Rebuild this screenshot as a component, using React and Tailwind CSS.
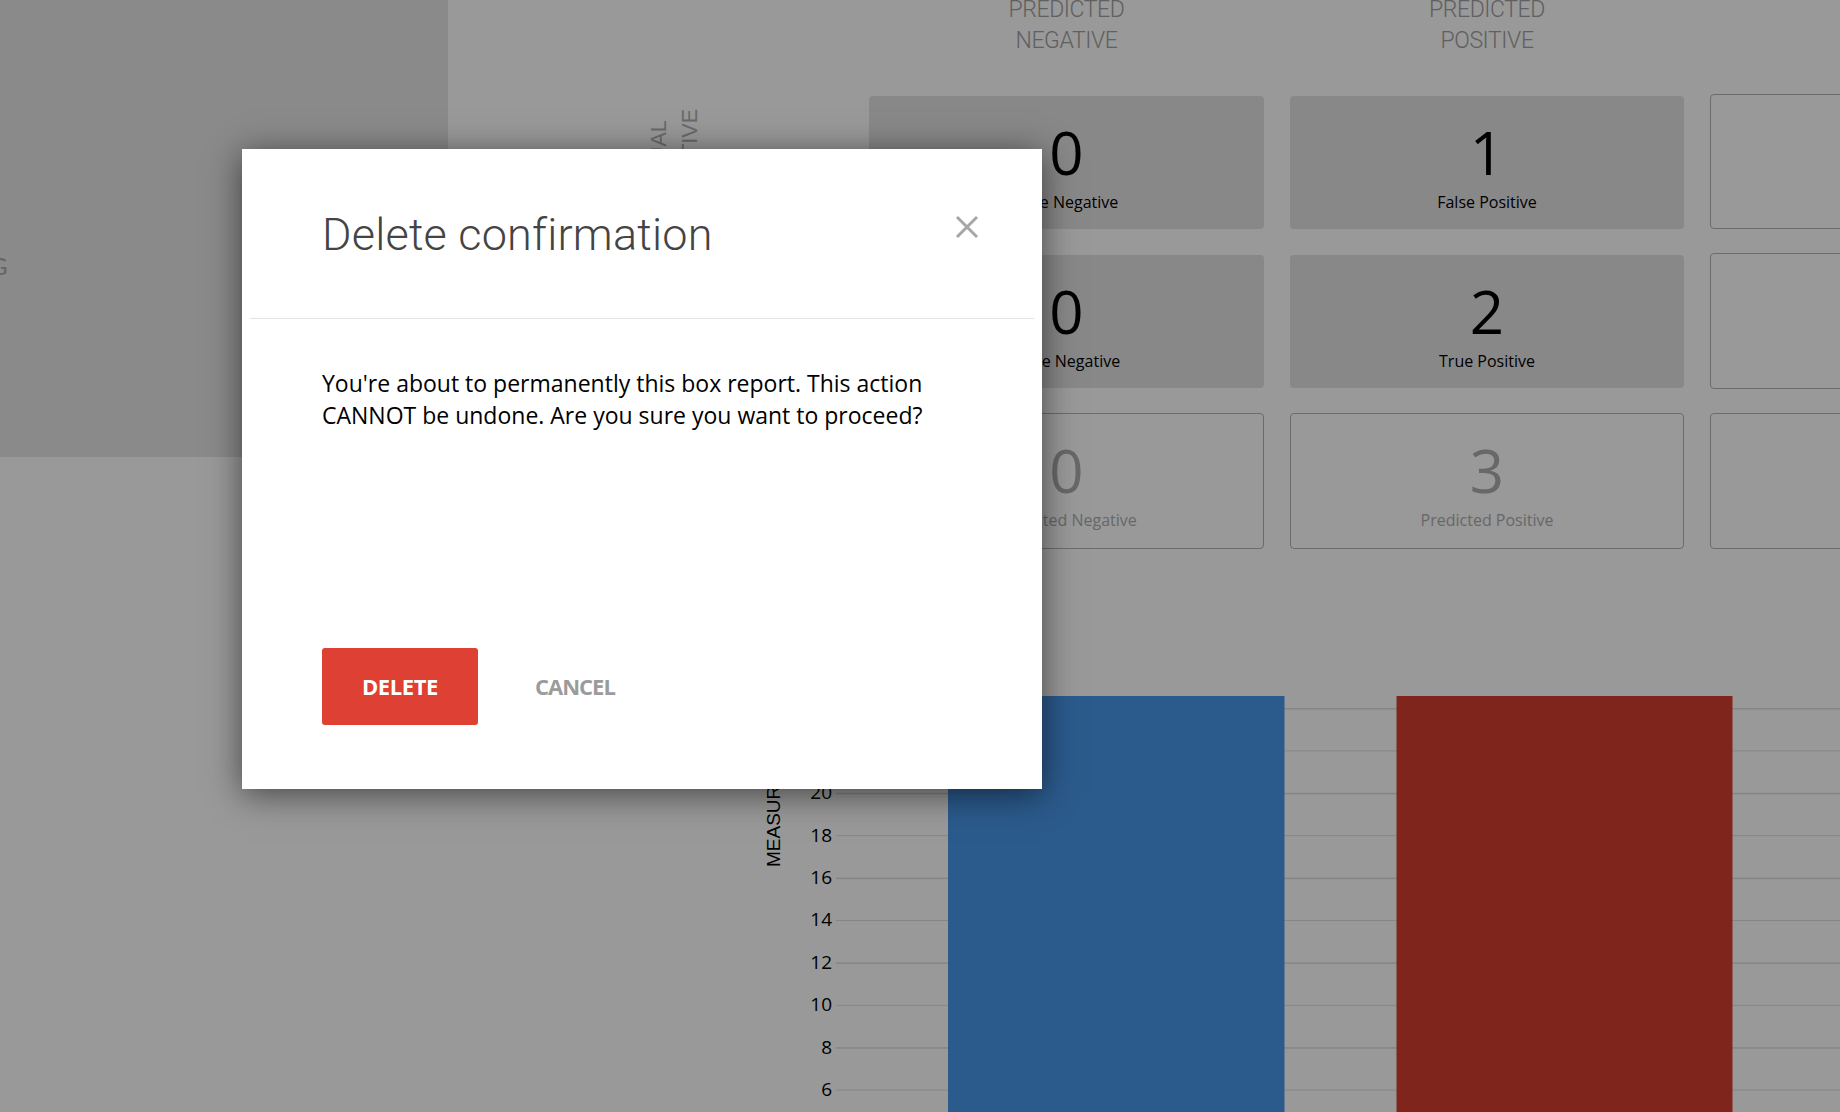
// Boîte de confirmation de suppression par-dessus le rapport (matrice + graphique)
const BODY_FONT = 'font-["Open_Sans",sans-serif]'
const TICKS = [20, 18, 16, 14, 12, 10, 8, 6]

function MatrixCard({ value, label, filled, muted }) {
  return (
    <div
      className={`flex h-full flex-col items-center rounded-[4px] pt-[26px] ${filled ? 'bg-[#e3e3e3]' : 'border border-[#b4b4b4]'} ${muted ? 'text-[#adadad]' : 'text-black'}`}
    >
      <div className={`${BODY_FONT} text-[60px] leading-[60px]`}>{value}</div>
      <div className={`${BODY_FONT} mt-[10px] text-[16px] leading-[20px]`}>{label}</div>
    </div>
  )
}

function Matrix() {
  return (
    <div className="grid grid-cols-[395px_395px_394px_394px] grid-rows-[96px_133px_159px_161px] gap-x-[26px]">
      <div />
      {['PREDICTED NEGATIVE', 'PREDICTED POSITIVE'].map((title) => (
        <div
          key={title}
          className='mx-auto -mt-[6px] w-[140px] text-center font-["Roboto",sans-serif] text-[23px] font-light leading-[31px] tracking-[-0.4px] text-[#a0a0a0]'
        >
          {title}
        </div>
      ))}
      <div />

      <div className="flex items-center pl-[196px]">
        <div className='rotate-180 text-center font-["Liberation_Sans",sans-serif] text-[21.5px] leading-[31px] text-[#b0b0b0] [writing-mode:vertical-rl]'>
          ACTUAL
          <br />
          NEGATIVE
        </div>
      </div>
      <MatrixCard value="0" label="True Negative" filled />
      <MatrixCard value="1" label="False Positive" filled />
      <div className="-mt-[2px] rounded-[4px] border border-[#b4b4b4]" />

      <div />
      <div className="pt-[26px]"><MatrixCard value="0" label="False Negative" filled /></div>
      <div className="pt-[26px]"><MatrixCard value="2" label="True Positive" filled /></div>
      <div className="-mb-[1px] mt-[24px] rounded-[4px] border border-[#b4b4b4]" />

      <div />
      <div className="pt-[25px]"><MatrixCard value="0" label="Predicted Negative" muted /></div>
      <div className="pt-[25px]"><MatrixCard value="3" label="Predicted Positive" muted /></div>
      <div className="mt-[25px] rounded-[4px] border border-[#b4b4b4]" />
    </div>
  )
}

function Chart() {
  const top = 18
  const step = 42.4
  return (
    <svg className="ml-[740px] block h-[422px] w-[1100px]" viewBox="0 0 1100 422">
      {TICKS.map((tick, i) => {
        const y = top + 2 * step + i * step
        return (
          <text key={tick} x="92" y={y + 6.4} textAnchor="end" fontFamily="Open Sans" fontSize="19" fill="#000">
            {tick}
          </text>
        )
      })}
      {Array.from({ length: 10 }).map((_, i) => (
        <rect key={i} x="96" y={top + i * step} width="1004" height={i % 2 ? 1 : 1.5} fill="#dedede" />
      ))}
      <rect x="208" y="6" width="336.5" height="416" fill="#4896ea" />
      <rect x="656.5" y="6" width="336" height="416" fill="#d63e2f" />
      <text transform="translate(40 177) rotate(-90)" fontFamily="Liberation Sans" fontSize="19" fill="#000">
        MEASUREMENTS
      </text>
    </svg>
  )
}

function DeleteModal() {
  return (
    <div className="absolute inset-0 bg-black/40 pl-[242px] pt-[149px]">
      <div className="h-[640px] w-[800px] bg-white shadow-[0_5px_32px_rgba(0,0,0,0.55)]">
        <div className="mx-[8px] flex h-[170px] items-start justify-between border-b border-[#e4e4e4] pl-[72px] pr-[55px]">
          <h2 className='mt-[59px] font-["Roboto",sans-serif] text-[45px] font-light leading-[54px] tracking-[0.2px] text-[#444444]'>
            Delete confirmation
          </h2>
          <svg className="mt-[66px] h-[24px] w-[24px]" viewBox="0 0 24 24" fill="none" stroke="#a6a6a6" strokeWidth="3">
            <path d="M2 2 22 22M22 2 2 22" />
          </svg>
        </div>
        <p className={`${BODY_FONT} ml-[80px] mt-[48px] w-[640px] text-[23px] leading-[32px] text-black`}>
          You're about to permanently this box report. This action CANNOT be undone. Are you sure you want to proceed?
        </p>
        <div className="ml-[80px] mt-[217px] flex items-center">
          <button className='h-[77px] w-[156px] rounded-[3px] bg-[#de4034] font-["Open_Sans",sans-serif] text-[22px] font-bold tracking-[-0.4px] text-white'>
            DELETE
          </button>
          <button className='ml-[57px] font-["Open_Sans",sans-serif] text-[22px] font-bold tracking-[-1px] text-[#9b9b9b]'>
            CANCEL
          </button>
        </div>
      </div>
    </div>
  )
}

export default function App() {
  return (
    <div className="relative h-[1112px] w-full overflow-hidden bg-white">
      <div className="flex h-[549px]">
        <div className="h-[457px] w-[448px] shrink-0 bg-[#e6e6e6] pt-[248px]">
          <div className='-ml-[10px] font-["Lato",sans-serif] text-[24px] leading-[36px] text-[#a8a8a8]'>G</div>
        </div>
        <Matrix />
      </div>
      <div className="mt-[141px]">
        <Chart />
      </div>
      <DeleteModal />
    </div>
  )
}
